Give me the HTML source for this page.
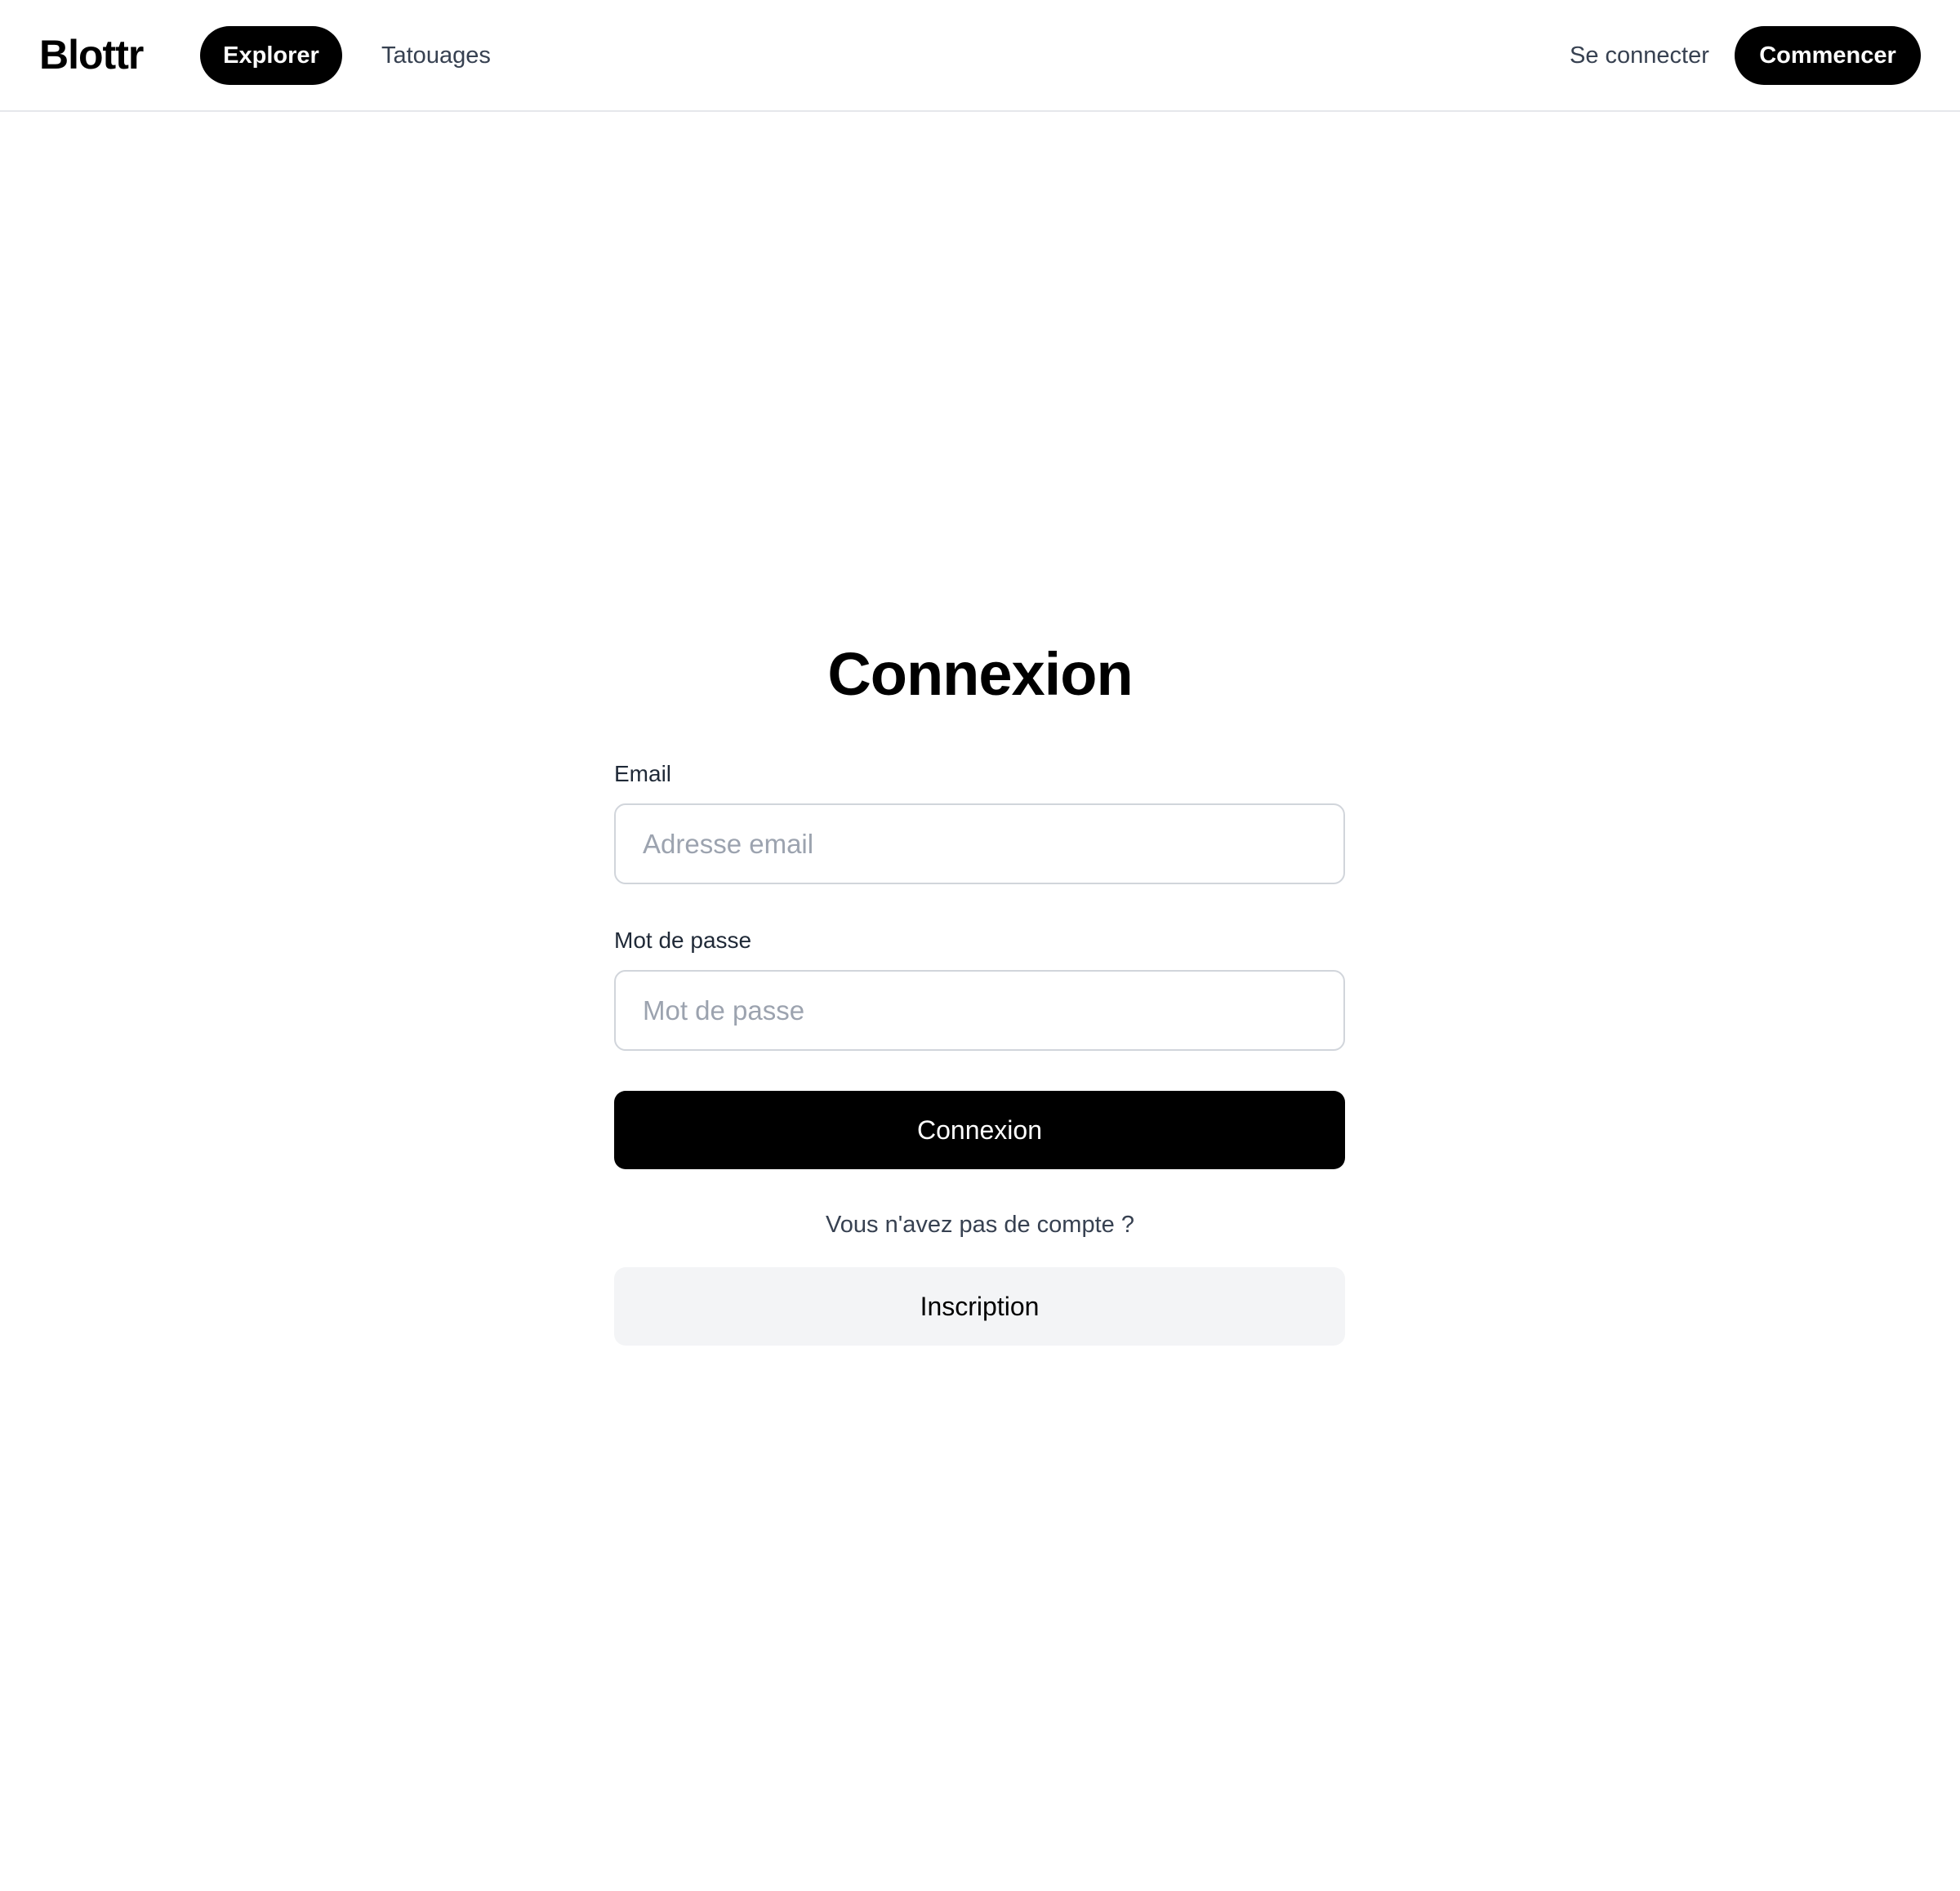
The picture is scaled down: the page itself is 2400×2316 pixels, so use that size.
<!DOCTYPE html>
<html><head><meta charset="utf-8"><style>
*{box-sizing:border-box;margin:0;padding:0}
body{width:2400px;height:2316px;background:#fff;font-family:"Liberation Sans",sans-serif;color:#000;position:relative;overflow:hidden}
.hdr{position:absolute;left:0;top:0;width:2400px;height:137px;border-bottom:2px solid #e5e7eb}
.abs{position:absolute}
.logo{left:48px;top:38px;font-size:50px;font-weight:bold;letter-spacing:-1px;line-height:58px}
.pill{background:#000;color:#fff;border-radius:36px;height:72px;top:32px;display:flex;align-items:center;justify-content:center;font-size:29px;font-weight:bold}
.nav{top:32px;height:72px;line-height:72px;font-size:29px;color:#374151}
.title{left:0;width:2400px;top:776px;text-align:center;font-size:74px;font-weight:bold;line-height:100px;letter-spacing:-1px}
.lbl{left:752px;font-size:28px;color:#1f2937;line-height:40px}
.inp{left:752px;width:895px;height:99px;border:2px solid #d1d5db;border-radius:14px;font-size:33px;color:#9ca3af;padding-left:33px;display:flex;align-items:center}
.btn{left:752px;width:895px;height:96px;border-radius:14px;display:flex;align-items:center;justify-content:center;font-size:32px}
</style></head><body>
<div class="hdr"></div>
<div class="abs logo">Blottr</div>
<div class="abs pill" style="left:245px;width:174px">Explorer</div>
<div class="abs nav" style="left:467px">Tatouages</div>
<div class="abs nav" style="left:1922px">Se connecter</div>
<div class="abs pill" style="left:2124px;width:228px">Commencer</div>
<div class="abs title">Connexion</div>
<div class="abs lbl" style="top:928px">Email</div>
<div class="abs inp" style="top:984px">Adresse email</div>
<div class="abs lbl" style="top:1132px">Mot de passe</div>
<div class="abs inp" style="top:1188px">Mot de passe</div>
<div class="abs btn" style="top:1336px;background:#000;color:#fff">Connexion</div>
<div class="abs" style="left:0;width:2400px;top:1480px;text-align:center;font-size:29px;color:#374151;line-height:40px">Vous n'avez pas de compte ?</div>
<div class="abs btn" style="top:1552px;background:#f3f4f6;color:#000">Inscription</div>
</body></html>
